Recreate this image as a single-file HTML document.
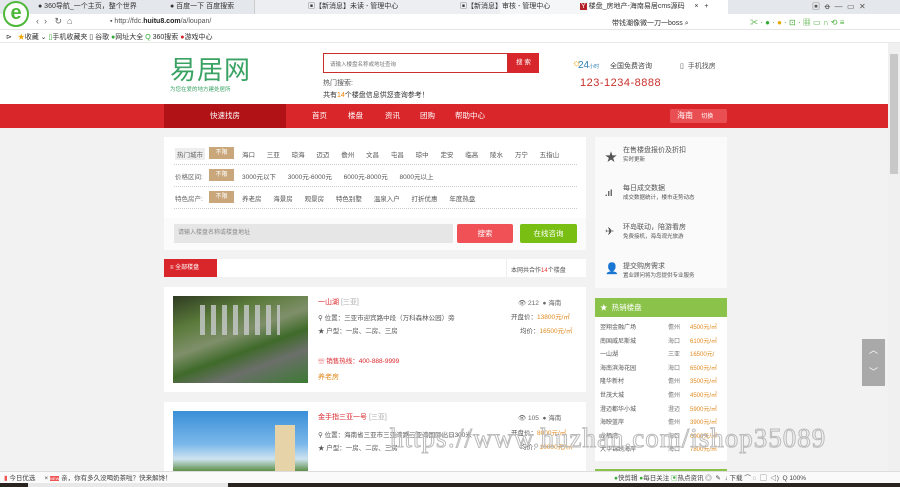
<!DOCTYPE html>
<html><head><meta charset="utf-8"><style>
*{margin:0;padding:0;box-sizing:border-box}
body{width:900px;height:487px;overflow:hidden;position:relative;background:#f2f2f2;font-family:"Liberation Sans","Noto Sans CJK SC",sans-serif;font-size:7px;color:#555}
.a{position:absolute;white-space:nowrap}
.tab{position:absolute;top:0;height:14px;font-size:7px;line-height:14px;color:#333}
.bx{position:absolute;width:25px;height:12px;background:#c9a77b;color:#fff;font-size:6px;display:flex;align-items:center;justify-content:center;line-height:1}
</style></head><body>
<div class="a" style="left:0;top:0;width:900px;height:14px;background:#e4e7eb"></div>
<div class="a" style="left:254px;top:0;width:246px;height:14px;background:#eceef1;border-left:1px solid #ccc"></div>
<div class="a" style="left:500px;top:0;width:90px;height:14px;background:#f5f6f7"></div>
<div class="a" style="left:588px;top:0;width:140px;height:14px;background:#fff"></div>
<div class="tab" style="left:38px">● 360导航_一个主页，整个世界</div>
<div class="tab" style="left:170px">● 百度一下 百度搜索</div>
<div class="tab" style="left:308px">▣【新消息】未读 - 管理中心</div>
<div class="tab" style="left:460px">▣【新消息】审核 - 管理中心</div>
<div class="tab" style="left:580px"><span style="background:#b5222a;color:#fff;padding:0 1px">Y</span> 楼盘_房地产-海南易居cms源码 &nbsp;&nbsp;&nbsp;&nbsp;×&nbsp;&nbsp; +</div>
<div class="tab" style="left:812px;font-size:8px;color:#555">▣ &nbsp;ꝋ &nbsp;— &nbsp;▭ &nbsp;✕</div>
<div class="a" style="left:0;top:14px;width:900px;height:16px;background:#fff;border-bottom:1px solid #e5e5e5"></div>
<div class="a" style="left:3px;top:1px;width:26px;height:26px;border-radius:50%;background:#fff;border:2px solid #4fb83b;color:#4fb83b;font-size:20px;font-weight:bold;line-height:20px;text-align:center">e</div>
<div class="a" style="left:36px;top:16px;font-size:9px;color:#666">‹ &nbsp;› &nbsp;&nbsp;↻ &nbsp;⌂</div>
<div class="a" style="left:110px;top:18px;font-size:7px;color:#555">▪ http://fdc.<b style="color:#222">huitu8.com</b>/a/loupan/</div>
<div class="a" style="left:612px;top:18px;font-size:7px;color:#333">带钱潮像微一刀一boss ⌕</div>
<div class="a" style="left:750px;top:17px;font-size:8px;color:#4a3">✂ · <span style="color:#3a3">●</span> · <span style="color:#e9a800">●</span> · ⊡ · ▦ ▭ ∩ ⟲ ≡</div>
<div class="a" style="left:0;top:30px;width:900px;height:13px;background:#fff;border-bottom:1px solid #e8e8e8"></div>
<div class="a" style="left:6px;top:32px;font-size:7px;color:#333"> ⊳ &nbsp;&nbsp;<span style="color:#f0a800">★</span>收藏 ⌄ <span style="color:#3a3">▯</span>手机收藏夹 ▯ 谷歌 <span style="color:#3a3">●</span>网址大全 <span style="color:#3a3">Q</span> 360搜索 <span style="color:#c22">●</span>游戏中心</div>
<div class="a" style="left:0;top:43px;width:888px;height:61px;background:#fff"></div>
<div class="a" style="left:170px;top:54px;font-size:26px;color:#3aa364;font-family:'Noto Sans CJK SC',sans-serif;line-height:30px;letter-spacing:1px">易居网</div>
<div class="a" style="left:170px;top:85px;font-size:5.5px;color:#3aa364">为您在爱的地方建处居所</div>
<div class="a" style="left:323px;top:53px;width:185px;height:20px;border:1px solid #c9302c;background:#fff"></div>
<div class="a" style="left:330px;top:60px;font-size:5.5px;color:#777">请输入楼盘名称或地址查询</div>
<div class="a" style="left:508px;top:53px;width:31px;height:20px;background:#d7262c;color:#fff;font-size:6.5px;line-height:20px;text-align:center">搜 索</div>
<div class="a" style="left:323px;top:78px;font-size:7px;color:#555">热门搜索:</div>
<div class="a" style="left:323px;top:90px;font-size:7px;color:#333">共有<span style="color:#f08300">14</span>个楼盘信息供您查询参考！</div>
<div class="a" style="left:572px;top:58px;font-size:10px;color:#e8a000">☼</div>
<div class="a" style="left:578px;top:60px;font-size:10px;color:#2a7fb5">24<span style="font-size:5px">小时</span></div>
<div class="a" style="left:610px;top:61px;font-size:7px;color:#444">全国免费咨询</div>
<div class="a" style="left:680px;top:61px;font-size:7px;color:#555">▯ &nbsp;手机找房</div>
<div class="a" style="left:580px;top:77px;font-size:11px;color:#c9302c;letter-spacing:.5px">123-1234-8888</div>
<div class="a" style="left:0;top:104px;width:888px;height:24px;background:#d9262b"></div>
<div class="a" style="left:164px;top:104px;width:122px;height:24px;background:#b11216;color:#fff;font-size:7.5px;line-height:24px;text-align:center">快速找房</div>
<div class="a" style="left:312px;top:104px;line-height:24px;font-size:7.5px;color:#fff">首页</div>
<div class="a" style="left:348px;top:104px;line-height:24px;font-size:7.5px;color:#fff">楼盘</div>
<div class="a" style="left:385px;top:104px;line-height:24px;font-size:7.5px;color:#fff">资讯</div>
<div class="a" style="left:420px;top:104px;line-height:24px;font-size:7.5px;color:#fff">团购</div>
<div class="a" style="left:455px;top:104px;line-height:24px;font-size:7.5px;color:#fff">帮助中心</div>
<div class="a" style="left:670px;top:109px;width:57px;height:14px;background:#e94f52;border-radius:2px;color:#fff;font-size:8px;line-height:14px;padding-left:7px">海南 <span style="font-size:6px;margin-left:6px">切换</span></div>
<div class="a" style="left:888px;top:43px;width:12px;height:428px;background:#f0f0f0"></div>
<div class="a" style="left:890px;top:54px;width:8px;height:120px;background:#c8c8c8"></div>
<div class="a" style="left:164px;top:137px;width:422px;height:113px;background:#fff"></div>
<div class="a" style="left:164px;top:218px;width:422px;height:32px;background:#fbfbfb"></div>
<div style="position:absolute;left:174px;top:144px;width:403px;height:21px;border-bottom:1px dotted #ccc"></div>
<div style="position:absolute;left:174px;top:166px;width:403px;height:21px;border-bottom:1px dotted #ccc"></div>
<div style="position:absolute;left:174px;top:188px;width:403px;height:21px;border-bottom:1px dotted #ccc"></div>
<div class="a" style="left:175px;top:148px;font-size:6.5px;background:#eee;padding:1px 2px;color:#666">热门城市</div>
<div class="bx" style="left:209px;top:147px">不限</div>
<div class="a" style="left:242px;top:149px;font-size:6.5px;color:#555;word-spacing:10px">海口 三亚 琼海 迈迈 儋州 文昌 屯昌 琼中 定安 临高 陵水 万宁 五指山</div>
<div class="a" style="left:175px;top:171px;font-size:6.5px;color:#666">价格区间:</div>
<div class="bx" style="left:209px;top:169px">不限</div>
<div class="a" style="left:242px;top:171px;font-size:6.5px;color:#555;word-spacing:10px">3000元以下 3000元-6000元 6000元-8000元 8000元以上</div>
<div class="a" style="left:175px;top:193px;font-size:6.5px;color:#666">特色房产:</div>
<div class="bx" style="left:209px;top:191px">不限</div>
<div class="a" style="left:242px;top:193px;font-size:6.5px;color:#555;word-spacing:10px">养老房 海景房 观景房 特色别墅 温泉入户 打折优惠 年度热盘</div>
<div class="a" style="left:174px;top:224px;width:279px;height:19px;background:#e6e6e6;font-size:6px;color:#888;line-height:19px;padding-left:4px">请输入楼盘名称或楼盘地址</div>
<div class="a" style="left:457px;top:224px;width:56px;height:19px;background:#ef5156;border-radius:2px;color:#fff;font-size:7.5px;line-height:19px;text-align:center">搜索</div>
<div class="a" style="left:520px;top:224px;width:57px;height:19px;background:#79bf13;border-radius:2px;color:#fff;font-size:7.5px;line-height:19px;text-align:center">在线咨询</div>
<div class="a" style="left:164px;top:259px;width:422px;height:18px;background:#fff"></div>
<div class="a" style="left:164px;top:259px;width:53px;height:18px;background:#d9262b;color:#fff;font-size:6px;line-height:18px;padding-left:6px">≡ 全部楼盘</div>
<div class="a" style="left:506px;top:259px;width:1px;height:18px;background:#eee"></div>
<div class="a" style="left:511px;top:265px;font-size:6px;color:#555">本网共合作<span style="color:#e33">14</span>个楼盘</div>
<div class="a" style="left:164px;top:287px;width:422px;height:105px;background:#fff"></div>
<div class="a" style="left:173px;top:296px;width:135px;height:87px;background:linear-gradient(160deg,#2e3a22 0%,#5a7a3a 25%,#7f8f6a 45%,#3f6a2a 60%,#6b6f6a 75%,#3d7a34 100%)"></div>
<div class="a" style="left:200px;top:305px;width:80px;height:30px;background:repeating-linear-gradient(90deg,#c8cbcc 0 5px,transparent 5px 11px);opacity:.8"></div>
<div class="a" style="left:318px;top:297px;font-size:7px;color:#d9262b">一山湖 <span style="color:#aaa">[三亚]</span></div>
<div class="a" style="left:318px;top:312px;font-size:6.5px;color:#555">⚲ 位置：三亚市迎宾路中段（万科森林公园）旁</div>
<div class="a" style="left:318px;top:325px;font-size:6.5px;color:#555">★ 户型：一房、二房、三房</div>
<div class="a" style="left:318px;top:355px;font-size:6.5px;color:#d9262b">☏ 销售热线：400-888-9999</div>
<div class="a" style="left:318px;top:372px;font-size:7px;color:#e08a1e">养老房</div>
<div class="a" style="left:518px;top:297px;font-size:6.5px;color:#666">👁 212 &nbsp;● 海南</div>
<div class="a" style="left:511px;top:311px;font-size:6.5px;color:#555">开盘价：<span style="color:#e08a1e">13800元/㎡</span></div>
<div class="a" style="left:520px;top:325px;font-size:6.5px;color:#555">均价：<span style="color:#e08a1e">16500元/㎡</span></div>
<div class="a" style="left:164px;top:402px;width:422px;height:70px;background:#fff"></div>
<div class="a" style="left:173px;top:411px;width:135px;height:60px;background:linear-gradient(180deg,#3a8fd8 0%,#7ab8ea 55%,#cfe3ef 80%,#5e8f4a 100%)"></div>
<div class="a" style="left:275px;top:425px;width:20px;height:46px;background:#e6d3a8"></div>
<div class="a" style="left:318px;top:412px;font-size:7px;color:#d9262b">金手指三亚一号 <span style="color:#aaa">[三亚]</span></div>
<div class="a" style="left:318px;top:429px;font-size:6.5px;color:#555">⚲ 位置：海南省三亚市三亚湾路三亚湾国际出口300米</div>
<div class="a" style="left:318px;top:442px;font-size:6.5px;color:#555">★ 户型：一房、二房、三房</div>
<div class="a" style="left:518px;top:412px;font-size:6.5px;color:#666">👁 105 &nbsp;● 海南</div>
<div class="a" style="left:511px;top:427px;font-size:6.5px;color:#555">开盘价：<span style="color:#e08a1e">8000元/㎡</span></div>
<div class="a" style="left:520px;top:441px;font-size:6.5px;color:#555">均价：<span style="color:#e08a1e">10000元/㎡</span></div>
<div class="a" style="left:595px;top:137px;width:132px;height:151px;background:#fafafa"></div>
<div class="a" style="left:605px;top:148px;font-size:12px;color:#555">★</div>
<div class="a" style="left:623px;top:146px;font-size:7px;color:#555;line-height:9px">在售楼盘报价及折扣<br><span style="font-size:5.5px">实时更新</span></div>
<div class="a" style="left:605px;top:188px;font-size:9px;color:#555;font-weight:bold">.ıl</div>
<div class="a" style="left:623px;top:184px;font-size:7px;color:#555;line-height:9px">每日成交数据<br><span style="font-size:5.5px">成交数据统计，楼市走势动态</span></div>
<div class="a" style="left:605px;top:225px;font-size:11px;color:#555">✈</div>
<div class="a" style="left:623px;top:223px;font-size:7px;color:#555;line-height:9px">环岛联动，陪游看房<br><span style="font-size:5.5px">免费接机，海岛观光旅游</span></div>
<div class="a" style="left:605px;top:262px;font-size:11px;color:#555">👤</div>
<div class="a" style="left:623px;top:262px;font-size:7px;color:#555;line-height:9px">提交购房需求<br><span style="font-size:5.5px">置业顾问将为您提供专业服务</span></div>
<div class="a" style="left:595px;top:298px;width:132px;height:19px;background:#8bc34a;color:#fff;font-size:7.5px;line-height:19px;padding-left:5px">★ &nbsp;热销楼盘</div>
<div class="a" style="left:595px;top:317px;width:132px;height:144px;background:#fff"></div>
<div class="a" style="left:600px;top:322px;font-size:6px;color:#555;line-height:13.6px">翌翔金融广场<br>南国威尼斯城<br>一山湖<br>海南滨海花园<br>隆华新村<br>世茂大城<br>澄迈都华小城<br>海映蓝岸<br>龙栖湾<br>大华锦绣海岸</div>
<div class="a" style="left:668px;top:322px;font-size:6px;color:#777;line-height:13.6px">儋州<br>海口<br>三亚<br>海口<br>儋州<br>儋州<br>澄迈<br>儋州<br>海口<br>海口</div>
<div class="a" style="left:690px;top:322px;font-size:6px;color:#e08a1e;line-height:13.6px">4500元/㎡<br>6100元/㎡<br>16500元/<br>6500元/㎡<br>3500元/㎡<br>4500元/㎡<br>5900元/㎡<br>3900元/㎡<br>6000元/㎡<br>7800元/㎡</div>
<div class="a" style="left:595px;top:469px;width:132px;height:2px;background:#8bc34a"></div>
<div class="a" style="left:862px;top:339px;width:23px;height:47px;background:#a9a9a9;color:#fff;font-size:9px;text-align:center;line-height:22px">︿<br>﹀</div>
<div class="a" style="left:390px;top:423px;font-size:27px;font-family:'Liberation Serif',serif;color:transparent;-webkit-text-stroke:1px #bbb;letter-spacing:1px">https://www.huzhan.com/ishop35089</div>
<div class="a" style="left:0;top:471px;width:900px;height:12px;background:#fafafa;border-top:1px solid #ddd"></div>
<div class="a" style="left:4px;top:472px;font-size:6.5px;color:#444"><span style="color:#e55">▮</span> 今日优选 &nbsp;&nbsp;&nbsp; × <span style="background:#e55;color:#fff;font-size:4px">NEW</span> 亲，你有多久没喝奶茶啦？快来解馋！</div>
<div class="a" style="left:614px;top:472px;font-size:6.5px;color:#444"><span style="color:#3a3">●</span>快剪辑 <span style="color:#3a3">●</span>每日关注 <span style="color:#3a3">▣</span>热点资讯 ◎ &nbsp;✎ &nbsp;↓ 下载 ⌒ ◌ &nbsp;▢ &nbsp;◁) &nbsp;Q 100%</div>
<div class="a" style="left:0;top:483px;width:900px;height:4px;background:#2a2420"></div>
<div class="a" style="left:28px;top:483px;width:200px;height:4px;background:#e8e8e8"></div>
</body></html>
